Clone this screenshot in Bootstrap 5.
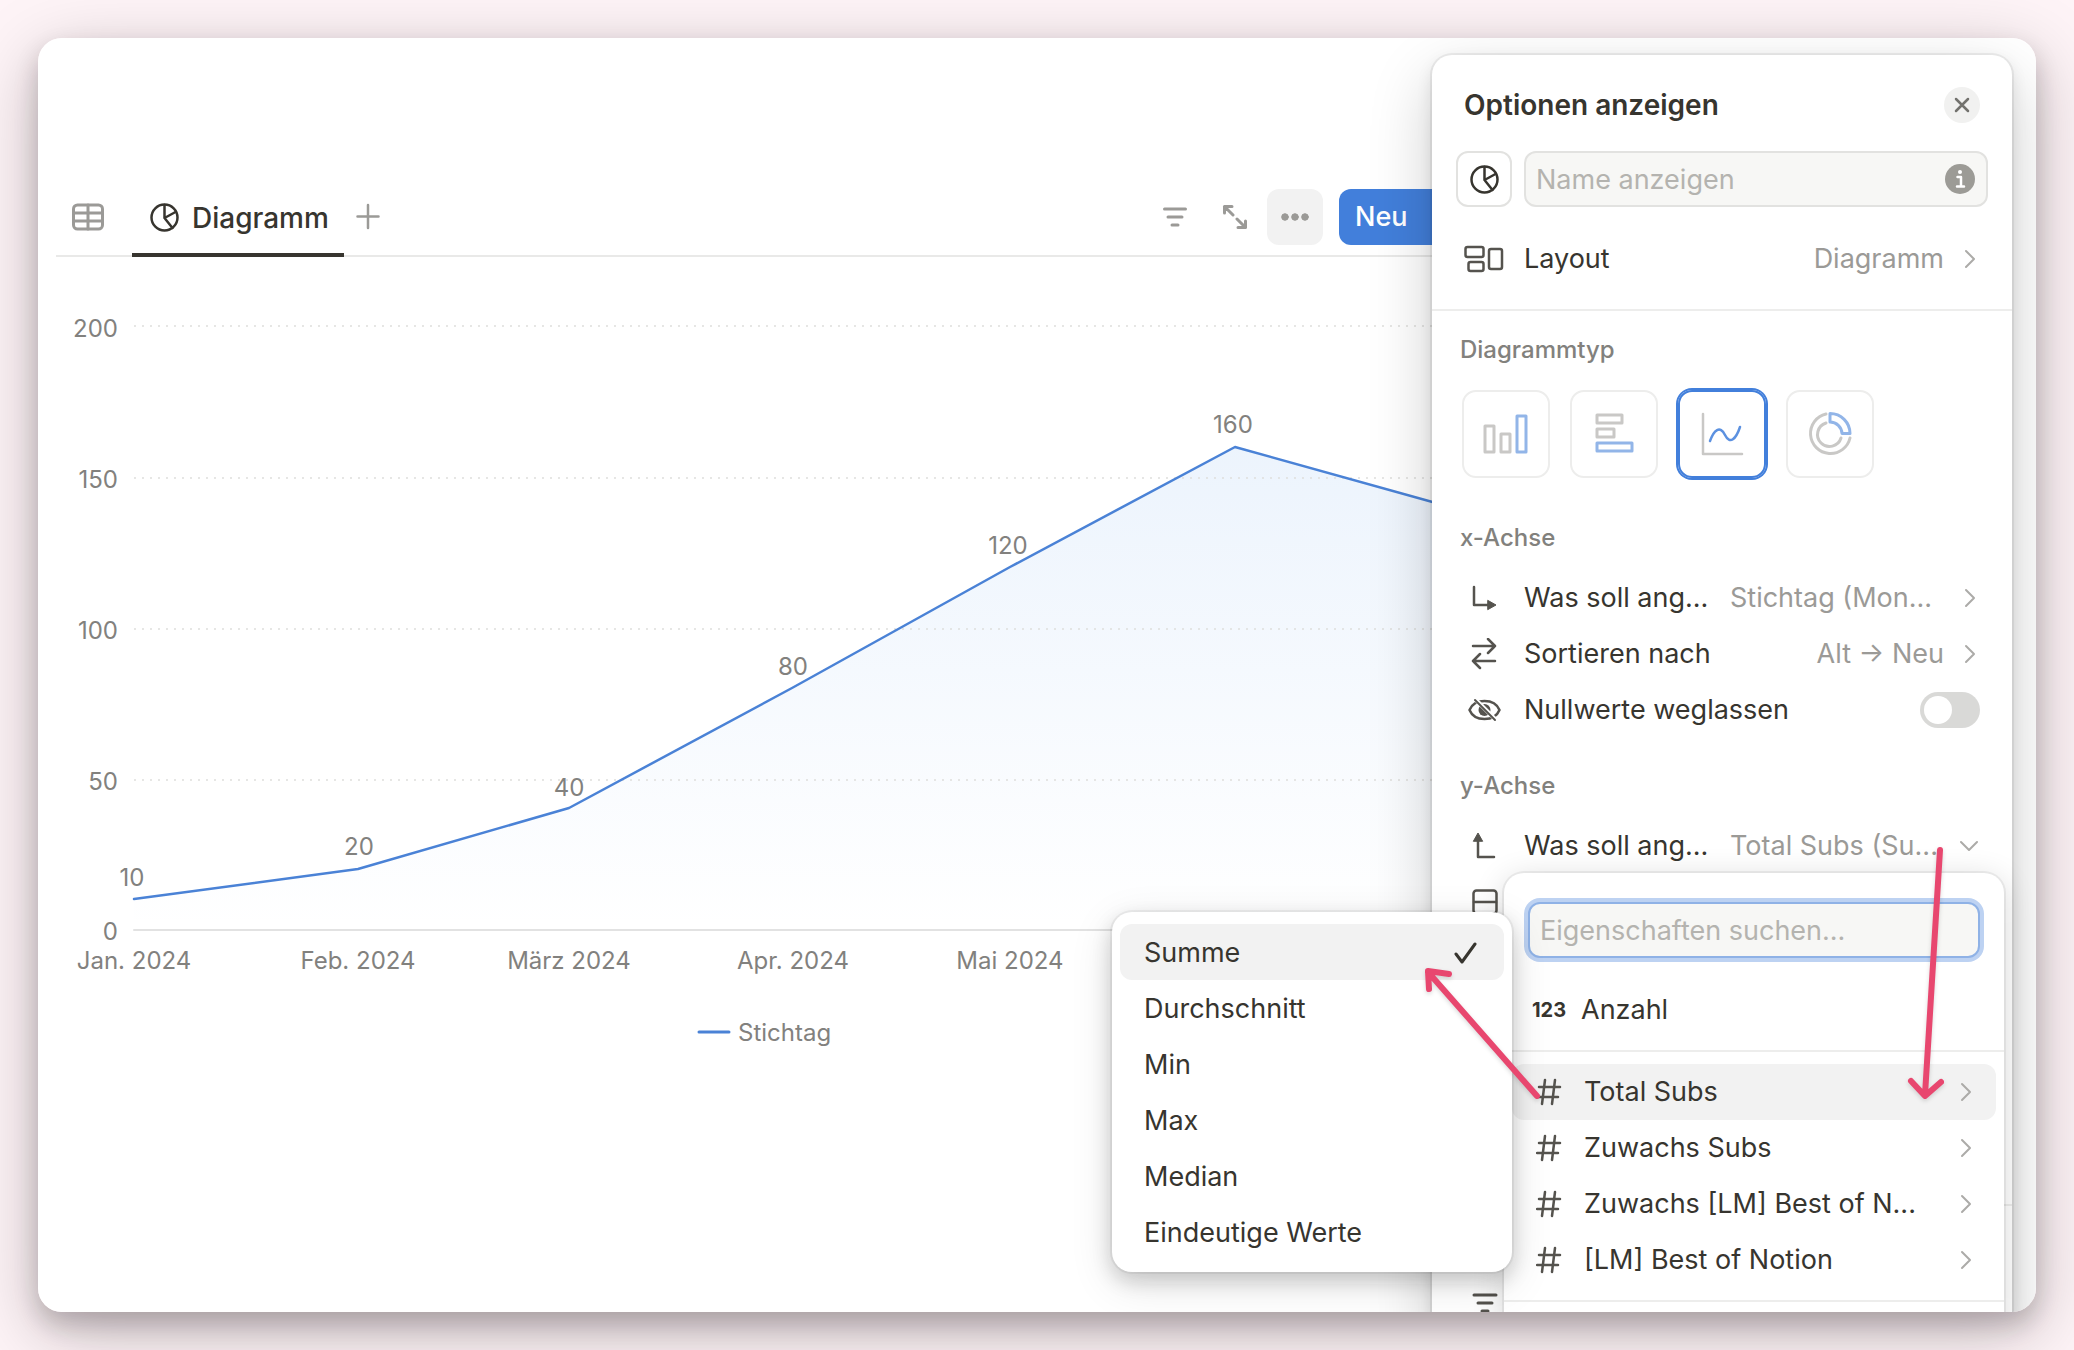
<!DOCTYPE html>
<html lang="de">
<head>
<meta charset="utf-8">
<meta name="viewport" content="width=device-width, initial-scale=1">
<title>Diagramm</title>
<link href="https://cdn.jsdelivr.net/npm/bootstrap@5.3.0/dist/css/bootstrap.min.css" rel="stylesheet">
<style>
  body { font-family: Inter, "Liberation Sans", sans-serif; font-size: 27px; line-height: 36px; color: #37352f; background: #fef4f7; padding: 38px; overflow: hidden; }
  button, input { font: inherit; color: inherit; }
  button { background: none; border: 0; padding: 0; text-align: left; }
  svg { flex: none; display: block; fill: none; stroke: currentColor; stroke-linecap: round; stroke-linejoin: round; }
  .window { background: #fff; border-radius: 24px; }
  .window-shadow { border-radius: 24px; box-shadow: 0 12px 24px rgba(20,10,15,.2), 0 20px 72px rgba(20,10,15,.26); }
  .toolbar { margin: 135px 40px 0 18px; height: 84px; border-bottom: 2px solid #e9e9e8; color: #9b9a97; }
  .view-tab { height: 84px; padding: 9px 15px 0 18px; gap: 13px; border-bottom: 4px solid #37352f; color: #37352f; font-weight: 500; font-size: 28px; }
  .tool-more { width: 56px; height: 56px; border-radius: 12px; background: #f2f2f2; }
  .btn-neu { height: 56px; width: 120px; border-radius: 12px; padding-left: 16px; background: #427fdb; color: #fff; font-weight: 500; }
  .tools { width: 833px; padding-bottom: 4px; }
  .chart { width: 100%; height: 820px; overflow: visible; font-size: 24px; }
  .chart text { fill: #82817e; stroke: none; }
  .floating { background: #fff; border-radius: 20px; }
  .panel { top: 17px; bottom: -24px; right: 24px; width: 580px; box-shadow: 0 0 0 2px rgba(15,15,15,.06), 0 6px 16px rgba(15,15,15,.1), 0 24px 64px rgba(15,15,15,.2); }
  .panel-head { padding: 23px 32px 19px; }
  .panel-head h1 { font-size: 28px; line-height: 54px; font-weight: 600; margin: 0; }
  .close-btn { width: 36px; height: 36px; border-radius: 50%; background: #f1f1f0; color: #73726e; }
  .box { width: 56px; height: 56px; border: 2px solid #e2e2e0; border-radius: 12px; }
  .field { height: 56px; width: 100%; border: 2px solid #e2e2e0; border-radius: 12px; background: #f7f7f5; padding: 0 10px; outline: 0; }
  .field::placeholder { color: #b4b3af; opacity: 1; }
  .info { right: 13px; top: 13px; }
  .opt { height: 56px; width: 100%; padding: 0 32px; }
  .opt .glyph { width: 60px; color: #55534e; }
  .opt .clipped { width: 206px; }
  .value { color: #9b9a97; }
  .chev { color: #acaba8; }
  .rule { border-top: 2px solid #ededec; }
  .section-rule { margin: 22px 0 23px; }
  .caption { font-size: 24px; line-height: 32px; font-weight: 500; color: #82817d; margin: 0 28px; }
  .caption-x { margin-top: 44px; }
  .kinds { gap: 20px; margin: 24px 30px 0; }
  .kind { width: 88px; height: 88px; border: 2px solid #ededec; border-radius: 14px; color: #c9c8c6; }
  .kind.active { box-shadow: 0 0 0 2px #427fdb; border-color: #427fdb; }
  .lower-rule { margin: 274px 0 69px; }
  .switch.form-check-input { width: 60px; height: 36px; margin: 0; border: 0; background-color: #d9d9d7; box-shadow: none; background-size: 32px; background-position: 2px center; background-image: url("data:image/svg+xml,%3csvg xmlns='http://www.w3.org/2000/svg' viewBox='-4 -4 8 8'%3e%3ccircle r='3.5' fill='%23fff'/%3e%3c/svg%3e"); }
  .prop-menu { top: 818px; left: 72px; right: 8px; bottom: 0; border-bottom-left-radius: 0; box-shadow: 0 0 0 2px rgba(15,15,15,.06), 0 6px 32px rgba(15,15,15,.16); }
  .prop-menu .field { border-color: #8fb2e6; box-shadow: 0 0 0 4px #bdd2f2; }
  .search { padding: 29px 24px 24px; }
  .prop { height: 56px; width: 100%; padding: 0 20px 0 24px; border-radius: 12px; }
  .prop .glyph { width: 48px; color: #55534e; }
  .hovered { background: #f2f2f2; }
  .num { font-size: 20px; font-weight: 700; width: 49px; }
  .agg-menu { top: 857px; left: -320px; width: 400px; padding: 12px 8px; box-shadow: 0 0 0 2px rgba(15,15,15,.05), 0 8px 20px rgba(15,15,15,.18), 0 12px 44px rgba(15,15,15,.12); }
  .agg { height: 56px; padding: 1px 26px 0 24px; border-radius: 12px; }
  .arrows { left: 0; top: 0; width: 580px; height: 1100px; overflow: visible; pointer-events: none; color: #e8476f; stroke-width: 6; filter: drop-shadow(0 2px 2px rgba(0,0,0,.15)); }
</style>
<script src="https://cdn.jsdelivr.net/npm/bootstrap@5.3.0/dist/js/bootstrap.bundle.min.js"></script>
</head>
<body class="d-flex vh-100">
<div class="window-shadow d-flex flex-grow-1">
<main class="window position-relative overflow-hidden flex-grow-1">
  <div class="toolbar d-flex align-items-start justify-content-between">
    <div class="d-flex align-items-center">
      <button class="ms-3 me-4 pt-1" aria-label="Tabelle"><svg width="32" height="34" stroke="#83827f" stroke-width="3"><rect x="1.5" y="5" width="29" height="24" rx="4"/><path d="M2 13h28M2 21h28M16 5v24"/></svg></button>
      <button class="view-tab d-flex align-items-center ms-1"><svg width="29" height="30" stroke-width="2.500"><circle cx="14.500" cy="14.500" r="13"/><path d="M14.500 2v13l11-6M14.500 15l8 10"/></svg>Diagramm</button>
      <button class="ms-1 pt-1" aria-label="Ansicht hinzufügen"><svg class="ms-2" width="26" height="28" stroke="#aaa9a6" stroke-width="2.500"><path d="M12 2v23M1.500 13.500h21"/></svg></button>
    </div>
    <div class="tools d-flex align-items-center pt-3">
      <button class="me-4" aria-label="Filter"><svg width="24" height="24" stroke-width="3"><path d="M1.500 4h21M5 12h14M9 20h6"/></svg></button>
      <button class="ms-2 me-3" aria-label="Vergrößern"><svg width="32" height="24" viewBox="-4 0 32 24" stroke-width="3"><path d="M10 10 1.500 1.500M1.500 8v-6.500H9M14 14l8.500 8.500M22.500 16v6.500H15"/></svg></button>
      <button class="tool-more d-flex align-items-center justify-content-center me-3" aria-label="Mehr"><svg width="28" height="8" stroke="none"><g fill="#9b9a97"><circle cx="4" cy="4" r="3.300"/><circle cx="14" cy="4" r="3.300"/><circle cx="24" cy="4" r="3.300"/></g></svg></button>
      <button class="btn-neu">Neu</button>
    </div>
  </div>
  <svg class="chart" role="img" aria-label="Liniendiagramm Stichtag">
    <defs><linearGradient id="fade" x1="0" y1="0" x2="0" y2="1"><stop offset="0" stop-color="#3b8ae8" stop-opacity=".095"/><stop offset="1" stop-color="#3b8ae8" stop-opacity="0"/></linearGradient></defs>
    <path fill="url(#fade)" stroke="none" d="M96 643 320 612 531 551 754 431 972 310 1197 190 1416 251V673H96z"/>
    <g stroke="#dededc" stroke-width="2" stroke-dasharray="0 8"><path d="M97 69H1900M97 221H1900M97 372H1900M97 523H1900"/></g>
    <path d="M96 673H1900" stroke="#e2e2e2" stroke-width="2"/>
    <path d="M96 642 320 612 531 551 754 431 972 310 1197 190 1416 251" stroke="#4a82d6" stroke-width="2.500"/>
    <g text-anchor="end"><text x="80" y="80">200</text><text x="80" y="231">150</text><text x="80" y="382">100</text><text x="80" y="533">50</text><text x="80" y="683">0</text></g>
    <g text-anchor="middle"><text x="94" y="629">10</text><text x="321" y="598">20</text><text x="531" y="539">40</text><text x="755" y="418">80</text><text x="970" y="297">120</text><text x="1195" y="176">160</text>
    <text x="96" y="712">Jan. 2024</text><text x="320" y="712">Feb. 2024</text><text x="531" y="712">März 2024</text><text x="755" y="712">Apr. 2024</text><text x="972" y="712">Mai 2024</text></g>
    <path d="M661 775h30" stroke="#4a82d6" stroke-width="3"/><text x="700" y="784">Stichtag</text>
  </svg>

  <aside class="panel floating position-absolute">
    <div class="panel-head d-flex align-items-center justify-content-between">
      <h1>Optionen anzeigen</h1>
      <button class="close-btn d-flex align-items-center justify-content-center" aria-label="Schließen"><svg width="16" height="16" stroke-width="2.500"><path d="M2 2l12 12M14 2 2 14"/></svg></button>
    </div>
    <div class="d-flex px-4">
      <button class="box d-flex align-items-center justify-content-center flex-shrink-0" aria-label="Symbol"><svg width="29" height="29" stroke="#55534e" stroke-width="2.500"><circle cx="14.500" cy="14.500" r="13"/><path d="M14.500 2v13l11-6M14.500 15l8 10"/></svg></button>
      <div class="position-relative flex-grow-1 ms-2 ps-1">
        <input class="field" aria-label="Name anzeigen" placeholder="Name anzeigen">
        <svg class="info position-absolute" width="30" height="30"><circle cx="15" cy="15" r="15" fill="#9c9b96" stroke="none"/><path d="M12.500 13H16v9M12 22.500h7" stroke="#fff" stroke-width="2.500"/><circle cx="15" cy="8" r="2" fill="#fff" stroke="none"/></svg>
      </div>
    </div>
    <button class="opt d-flex align-items-center mt-4"><span class="glyph"><svg width="40" height="28" stroke-width="2.500"><rect x="1.500" y="2" width="18" height="10" rx="2"/><rect x="4.500" y="17" width="15" height="9" rx="2"/><rect x="25" y="4" width="13" height="20" rx="2"/></svg></span><span class="flex-grow-1">Layout</span><span class="value">Diagramm</span><svg class="chev ms-3" width="20" height="24" stroke-width="2"><path d="M6 4l8 8-8 8"/></svg></button>
    <div class="rule section-rule"></div>
    <h2 class="caption">Diagrammtyp</h2>
    <div class="kinds d-flex">
      <button class="kind d-flex align-items-center justify-content-center" aria-label="Säulen"><svg width="46" height="46" stroke-width="3"><rect x="2" y="15" width="9" height="26"/><rect x="18" y="23" width="9" height="18"/><rect x="34" y="5" width="9" height="36" stroke="#92b5e8"/></svg></button>
      <button class="kind d-flex align-items-center justify-content-center" aria-label="Balken"><svg width="40" height="44" stroke-width="3"><rect x="3" y="3" width="25" height="8"/><rect x="3" y="17" width="17" height="8"/><rect x="3" y="31" width="35" height="8" stroke="#92b5e8"/></svg></button>
      <button class="kind active d-flex align-items-center justify-content-center" aria-label="Linie" aria-pressed="true"><svg width="44" height="46" stroke-width="2.500"><path d="M3 3v40h39"/><path d="M10 30C14 19 20 14 25 24s11 4 15-8" stroke="#5c91e0"/></svg></button>
      <button class="kind d-flex align-items-center justify-content-center" aria-label="Ring"><svg width="46" height="48" stroke-width="3"><path d="M19 4A20 20 0 1 0 43 28M19 13A12 12 0 1 0 34 28"/><path d="M23 3.500A20 20 0 0 1 43 23.500H35A12 12 0 0 0 23 12z" stroke="#92b5e8"/></svg></button>
    </div>
    <h2 class="caption caption-x">x-Achse</h2>
    <button class="opt d-flex align-items-center mt-3"><span class="glyph"><svg class="ms-1" width="30" height="30" stroke-width="2.500"><path d="M6 4v18h14"/><path d="M20 17.500 28 22l-8 4.500z" fill="currentColor" stroke-width="1"/></svg></span><span class="clipped">Was soll ang...</span><span class="value flex-grow-1">Stichtag (Mon...</span><svg class="chev" width="20" height="24" stroke-width="2"><path d="M6 4l8 8-8 8"/></svg></button>
    <button class="opt d-flex align-items-center"><span class="glyph"><svg class="ms-1" width="30" height="32" stroke-width="2.500"><path d="M5 8h22M20 1l7 7-7 7M27 23H5M12 16l-7 7 7 7"/></svg></span><span class="flex-grow-1">Sortieren nach</span><span class="value">Alt → Neu</span><svg class="chev ms-3" width="20" height="24" stroke-width="2"><path d="M6 4l8 8-8 8"/></svg></button>
    <div class="opt d-flex align-items-center"><span class="glyph"><svg class="ms-1" width="34" height="24" stroke-width="2.500"><path d="M1.500 12C4 6 10 3 16.500 3S29 6 31.500 12C29 18 23 21 16.500 21S4 18 1.500 12z"/><circle cx="16.500" cy="12" r="6" fill="currentColor" stroke="none"/><path d="M9 3l19 19" stroke="#fff" stroke-width="4"/><path d="M7 2l20 20" stroke-width="2"/></svg></span><label class="flex-grow-1" for="nullwerte">Nullwerte weglassen</label><div class="form-switch p-0 m-0 d-flex"><input class="form-check-input switch" type="checkbox" id="nullwerte" role="switch"></div></div>
    <h2 class="caption mt-4 pt-2">y-Achse</h2>
    <button class="opt d-flex align-items-center mt-3"><span class="glyph"><svg class="ms-1" width="30" height="30" stroke-width="2.500"><path d="M10 8v18h16"/><path d="M5.500 10 10 2l4.500 8z" fill="currentColor" stroke-width="1"/></svg></span><span class="clipped">Was soll ang...</span><span class="value flex-grow-1">Total Subs (Su...</span><svg class="chev" width="20" height="24" stroke-width="2"><path d="M1 8l8 8 8-8"/></svg></button>
    <div class="opt d-flex align-items-center"><span class="glyph"><svg class="ms-2" width="26" height="26" stroke-width="2.500"><rect x="1.500" y="1.500" width="23" height="23" rx="3"/><path d="M2 13h22"/></svg></span></div>
    <div class="rule lower-rule"></div>
    <div class="opt d-flex align-items-center"><span class="glyph"><svg class="ms-2" width="26" height="24" stroke-width="3"><path d="M2 4h22M6 12h14M10 20h6"/></svg></span></div>

    <section class="prop-menu floating position-absolute">
      <div class="search"><input class="field" aria-label="Eigenschaften suchen" placeholder="Eigenschaften suchen..."></div>
      <button class="prop d-flex align-items-center ms-1"><span class="num">123</span>Anzahl</button>
      <div class="rule mt-2 pt-1 border-0"></div>
      <div class="rule pb-2"></div>
      <div class="px-2 pt-1">
        <button class="prop hovered d-flex align-items-center"><span class="glyph"><svg width="26" height="28" stroke-width="2.500"><path d="M9 2 6 26M19 2l-3 24M3 9h21M1 19h21"/></svg></span><span class="flex-grow-1">Total Subs</span><svg class="chev" width="20" height="24" stroke-width="2"><path d="M6 4l8 8-8 8"/></svg></button>
        <button class="prop d-flex align-items-center"><span class="glyph"><svg width="26" height="28" stroke-width="2.500"><path d="M9 2 6 26M19 2l-3 24M3 9h21M1 19h21"/></svg></span><span class="flex-grow-1">Zuwachs Subs</span><svg class="chev" width="20" height="24" stroke-width="2"><path d="M6 4l8 8-8 8"/></svg></button>
        <button class="prop d-flex align-items-center"><span class="glyph"><svg width="26" height="28" stroke-width="2.500"><path d="M9 2 6 26M19 2l-3 24M3 9h21M1 19h21"/></svg></span><span class="flex-grow-1">Zuwachs [LM] Best of N...</span><svg class="chev" width="20" height="24" stroke-width="2"><path d="M6 4l8 8-8 8"/></svg></button>
        <button class="prop d-flex align-items-center"><span class="glyph"><svg width="26" height="28" stroke-width="2.500"><path d="M9 2 6 26M19 2l-3 24M3 9h21M1 19h21"/></svg></span><span class="flex-grow-1">[LM] Best of Notion</span><svg class="chev" width="20" height="24" stroke-width="2"><path d="M6 4l8 8-8 8"/></svg></button>
      </div>
      <div class="rule mt-2 pt-1 border-0"></div><div class="rule"></div>
    </section>

    <section class="agg-menu floating position-absolute d-flex flex-column">
      <button class="agg hovered d-flex align-items-center justify-content-between">Summe<svg width="24" height="24" stroke-width="3"><path d="M2 13l6 8L21 3"/></svg></button>
      <button class="agg">Durchschnitt</button>
      <button class="agg">Min</button>
      <button class="agg">Max</button>
      <button class="agg">Median</button>
      <button class="agg">Eindeutige Werte</button>
    </section>

    <svg class="arrows position-absolute" aria-hidden="true"><path d="M508 795 493 1040M479 1026l14 15 16-14"/><path d="M105 1041-4 917M-3 934l-1-18 21 3"/></svg>
  </aside>
</main>
</div>
</body>
</html>
